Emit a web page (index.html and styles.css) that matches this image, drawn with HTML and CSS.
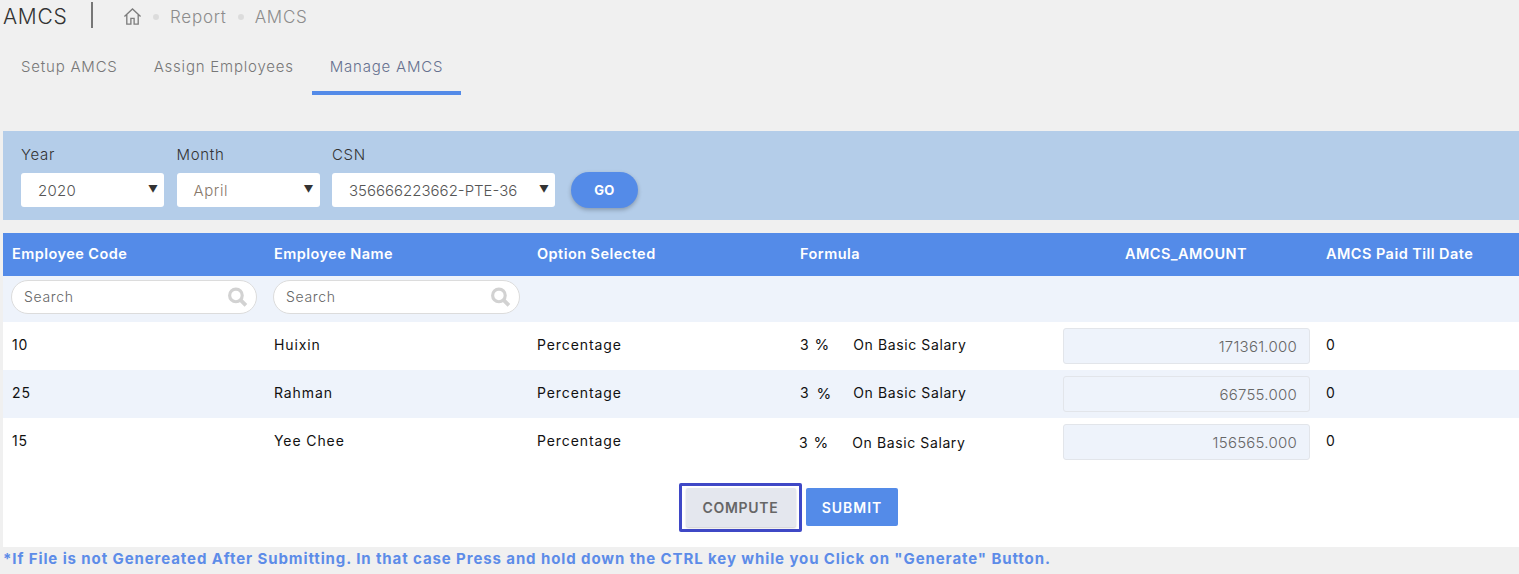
FILE: index.html
```html
<!DOCTYPE html>
<html lang="en">
<head>
<meta charset="utf-8">
<title>AMCS</title>
<link rel="stylesheet" href="styles.css">
</head>
<body>
<header class="topbar">
  <h1 class="title">AMCS</h1>
  <span class="divider"></span>
  <nav class="crumbs">
    <svg class="home" viewBox="0 0 20 20" width="19" height="19" fill="none" stroke="#7d7d7d" stroke-width="1.4"><path d="M1.5 10 10 2l8.500 8M4 8v10h4.300v-6h3.400v6H16V8"/></svg>
    <span class="dot"></span><span>Report</span><span class="dot"></span><span>AMCS</span>
  </nav>
</header>
<nav class="tabs">
  <a class="tab">Setup AMCS</a>
  <a class="tab">Assign Employees</a>
  <a class="tab active">Manage AMCS</a>
</nav>
<section class="filters">
  <div class="field f1"><label>Year</label><div class="select">2020<i class="caret">▼</i></div></div>
  <div class="field f2"><label>Month</label><div class="select muted">April<i class="caret">▼</i></div></div>
  <div class="field f3"><label>CSN</label><div class="select">356666223662-PTE-36<i class="caret">▼</i></div></div>
  <button class="go">GO</button>
</section>
<section class="panel">
  <div class="row head">
    <div>Employee Code</div><div>Employee Name</div><div>Option Selected</div><div>Formula</div><div class="center">AMCS_AMOUNT</div><div>AMCS Paid Till Date</div>
  </div>
  <div class="row searches">
    <div><div class="search"><span>Search</span><svg viewBox="0 0 20 20" width="21" height="21" fill="none" stroke="#d2d2d2"><circle cx="8.500" cy="8" r="6" stroke-width="3"/><path d="m13 12.500 5 5" stroke-width="3.600"/></svg></div></div>
    <div><div class="search"><span>Search</span><svg viewBox="0 0 20 20" width="21" height="21" fill="none" stroke="#d2d2d2"><circle cx="8.500" cy="8" r="6" stroke-width="3"/><path d="m13 12.500 5 5" stroke-width="3.600"/></svg></div></div>
  </div>
  <div class="row data">
    <div>10</div><div>Huixin</div><div>Percentage</div>
    <div class="formula"><span>3</span><span class="pct">%</span><span class="basis">On Basic Salary</span></div>
    <div><div class="amount">171361.000</div></div><div>0</div>
  </div>
  <div class="row data alt">
    <div>25</div><div>Rahman</div><div>Percentage</div>
    <div class="formula"><span>3</span><span class="pct wide">%</span><span class="basis narrow">On Basic Salary</span></div>
    <div><div class="amount">66755.000</div></div><div>0</div>
  </div>
  <div class="row data">
    <div>15</div><div>Yee Chee</div><div>Percentage</div>
    <div class="formula low"><span>3</span><span class="pct">%</span><span class="basis">On Basic Salary</span></div>
    <div><div class="amount">156565.000</div></div><div>0</div>
  </div>
  <div class="actions">
    <button class="btn compute">COMPUTE</button>
    <button class="btn submit">SUBMIT</button>
  </div>
</section>
<p class="note">*If File is not Genereated After Submitting. In that case Press and hold down the CTRL key while you Click on "Generate" Button.</p>
</body>
</html>
```
FILE: styles.css
```css
* { box-sizing: border-box; }
html, body { margin: 0; height: 574px; overflow: hidden; }
body { background: #f0f0f0; font-family: Inter, "Open Sans", sans-serif; font-size: 14px; color: #111; }

.topbar { display: flex; align-items: center; height: 33px; padding-left: 3px; }
.title { margin: 0; font-size: 21px; font-weight: 300; letter-spacing: 0.7px; color: #333; width: 88px; }
.divider { width: 2px; height: 26px; background: #777; margin-top: -3px; }
.crumbs { display: flex; align-items: center; margin-left: 30px; color: #8c8c8c; font-size: 17px; font-weight: 300; letter-spacing: 0.75px; }
.dot { width: 6px; height: 6px; border-radius: 50%; background: #dcdcdc; margin: 0 11px; }

.tabs { display: flex; height: 62px; padding-left: 3px; }
.tab { height: 62px; padding: 24px 18px 0; border-bottom: 4px solid transparent; color: #777; font-size: 15px; font-weight: 300; letter-spacing: 0.79px; }
.tab.active { color: #66708f; border-bottom-color: #548be8; }

.filters { display: flex; align-items: flex-start; margin: 36px 0 0 3px; height: 89px; padding: 15px 0 0 18px; background: #b4cde9; }
.field { display: flex; flex-direction: column; }
.f1, .f2 { width: 155.5px; }
.f3 { width: 239px; }
.field label { font-size: 15px; font-weight: 300; line-height: 18px; color: #333; letter-spacing: 0.7px; }
.select { position: relative; width: 143px; height: 34px; margin-top: 9px; padding-left: 17px; background: #fff; border-radius: 3px; font-size: 15px; font-weight: 300; line-height: 35px; color: #555; letter-spacing: 0.3px; }
.f3 .select { width: 223px; letter-spacing: 0; }
.select.muted { color: #87786a; letter-spacing: 0.6px; }
.caret { position: absolute; right: 6px; top: 0; font-size: 10px; font-style: normal; line-height: 32px; color: #333; letter-spacing: 0; }
.go { width: 67px; height: 36px; margin-top: 26px; border: 0; border-radius: 18px; background: #548be8; color: #fff; font: 700 13px Inter, sans-serif; letter-spacing: 0.3px; box-shadow: 0 2px 4px rgba(0,0,0,.25); }

.panel { margin: 13px 0 0 3px; background: #fff; height: 314px; }
.row { display: grid; grid-template-columns: 262px 263px 263px 263px 263px 1fr; }
.row > div { padding: 0 8px 0 9px; min-width: 0; white-space: nowrap; }
.head { height: 43px; background: #548be8; color: #fff; font-size: 14.500px; font-weight: 600; line-height: 42px; letter-spacing: 0.45px; }
.head .center { text-align: center; }
.searches { height: 46px; background: #eef3fb; padding-top: 4px; }
.searches > div { padding: 0 0 0 8px; }
.search { display: flex; align-items: center; justify-content: space-between; width: 246px; height: 34px; padding: 0 8px 0 12px; background: #fff; border: 1px solid #dcdcdc; border-radius: 17px; font-size: 14px; font-weight: 300; line-height: 30px; color: #666; letter-spacing: 0.65px; }
.searches > div:nth-child(2) .search { width: 247px; }
.data { height: 48px; font-size: 14px; line-height: 46px; letter-spacing: 0.9px; }
.alt { background: #eef3fb; }
.formula { display: flex; }
.formula span { display: block; }
.pct { margin-left: 5px; font-size: 15px; letter-spacing: 0; }
.pct.wide { margin-left: 7px; position: relative; top: 1px; }
.basis { margin-left: 24px; letter-spacing: 0.6px; }
.basis.narrow { margin-left: 22px; }
.formula.low { padding-left: 8px; line-height: 50px; }
.amount { width: 247px; height: 36px; margin-top: 6px; padding-right: 12px; border: 1px solid #e2e5ea; border-radius: 3px; background: #eef3fb; text-align: right; font-size: 15px; font-weight: 300; line-height: 36px; color: #666; letter-spacing: 0.25px; }

.actions { display: flex; align-items: center; justify-content: center; gap: 4px; padding: 17px 0 0 55px; }
.btn { height: 38px; border: 0; border-radius: 2px; font: 600 14px Inter, sans-serif; letter-spacing: 0.7px; }
.compute { width: 123px; height: 49px; border: 3px solid #3f48c6; background: #fff; padding: 0; color: #666; position: relative; z-index: 0; }
.compute::before { content: ""; position: absolute; z-index: -1; left: 4px; right: 3px; top: 2px; bottom: 2px; background: #e4e7ee; border-radius: 2px; box-shadow: 0 1px 2px rgba(0,0,0,.2); }
.submit { width: 92px; margin-bottom: 1px; background: #548be8; color: #fff; letter-spacing: 0.95px; }

.note { margin: 0; padding: 2px 0 0 3px; font-size: 15px; font-weight: 700; color: #5d8ce8; letter-spacing: 0.9px; white-space: nowrap; }
```
